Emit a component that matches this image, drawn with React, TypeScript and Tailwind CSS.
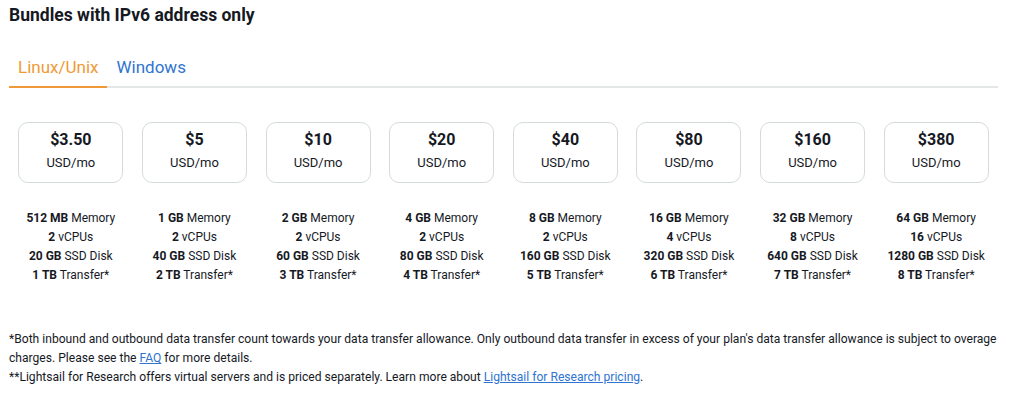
import React from 'react';

interface Bundle {
  price: string;
  memory: string;
  cpus: string;
  disk: string;
  transfer: string;
}

const bundles: Bundle[] = [
  { price: '$3.50', memory: '512 MB', cpus: '2', disk: '20 GB', transfer: '1 TB' },
  { price: '$5', memory: '1 GB', cpus: '2', disk: '40 GB', transfer: '2 TB' },
  { price: '$10', memory: '2 GB', cpus: '2', disk: '60 GB', transfer: '3 TB' },
  { price: '$20', memory: '4 GB', cpus: '2', disk: '80 GB', transfer: '4 TB' },
  { price: '$40', memory: '8 GB', cpus: '2', disk: '160 GB', transfer: '5 TB' },
  { price: '$80', memory: '16 GB', cpus: '4', disk: '320 GB', transfer: '6 TB' },
  { price: '$160', memory: '32 GB', cpus: '8', disk: '640 GB', transfer: '7 TB' },
  { price: '$380', memory: '64 GB', cpus: '16', disk: '1280 GB', transfer: '8 TB' },
];

export default function App() {
  return (
    <div className="w-[1024px] h-[396px] bg-white px-[9px] pt-[4px] text-[#16191f] font-['Roboto',_'Noto_Sans',_sans-serif] overflow-hidden">
      {/* Title */}
      <h2 className="text-[17.5px] leading-[22px] font-bold">Bundles with IPv6 address only</h2>

      {/* Tabs */}
      <div className="mt-[30px] w-[989px] flex border-b-2 border-[#e4e7e7] text-[17px] leading-[22px]">
        <div className="pl-[9px] pr-[9px] pb-[8px] -mb-[2px] border-b-2 border-[#f09a37] text-[#f09a37]">Linux/Unix</div>
        <div className="pl-[9px] pr-[8px] pb-[8px] text-[#2f74d0]">Windows</div>
      </div>

      {/* Bundles */}
      <div className="mt-[34px] w-[989px] grid grid-cols-8">
        {bundles.map(b => (
          <div key={b.price} className="flex flex-col items-center">
            <div className="w-[105px] h-[61px] rounded-[10px] border-[1.5px] border-[#d5dbdb] flex flex-col items-center pt-[6px]">
              <div className="text-[16px] leading-[22px] font-bold">{b.price}</div>
              <div className="text-[13px] leading-[20px] mt-[2px]">USD/mo</div>
            </div>
            <div className="mt-[26px] text-[12px] leading-[19px] text-center">
              <div><span className="font-bold">{b.memory}</span> Memory</div>
              <div><span className="font-bold">{b.cpus}</span> vCPUs</div>
              <div><span className="font-bold">{b.disk}</span> SSD Disk</div>
              <div><span className="font-bold">{b.transfer}</span> Transfer*</div>
            </div>
          </div>
        ))}
      </div>

      {/* Footnotes */}
      <div className="mt-[45px] w-[1000px] text-[12.1px] leading-[19px]">
        <p>
          <span className="whitespace-nowrap">*Both inbound and outbound data transfer count towards your data transfer allowance. Only outbound data transfer in excess of your plan's data transfer allowance is subject to overage</span>
          <br />
          <span>charges. Please see the </span>
          <a className="text-[#2f74d0] underline underline-offset-1">FAQ</a>
          <span> for more details.</span>
        </p>
        <p>
          **Lightsail for Research offers virtual servers and is priced separately. Learn more about <a className="text-[#2f74d0] underline underline-offset-1">Lightsail for Research pricing</a>.
        </p>
      </div>
    </div>
  );
}
